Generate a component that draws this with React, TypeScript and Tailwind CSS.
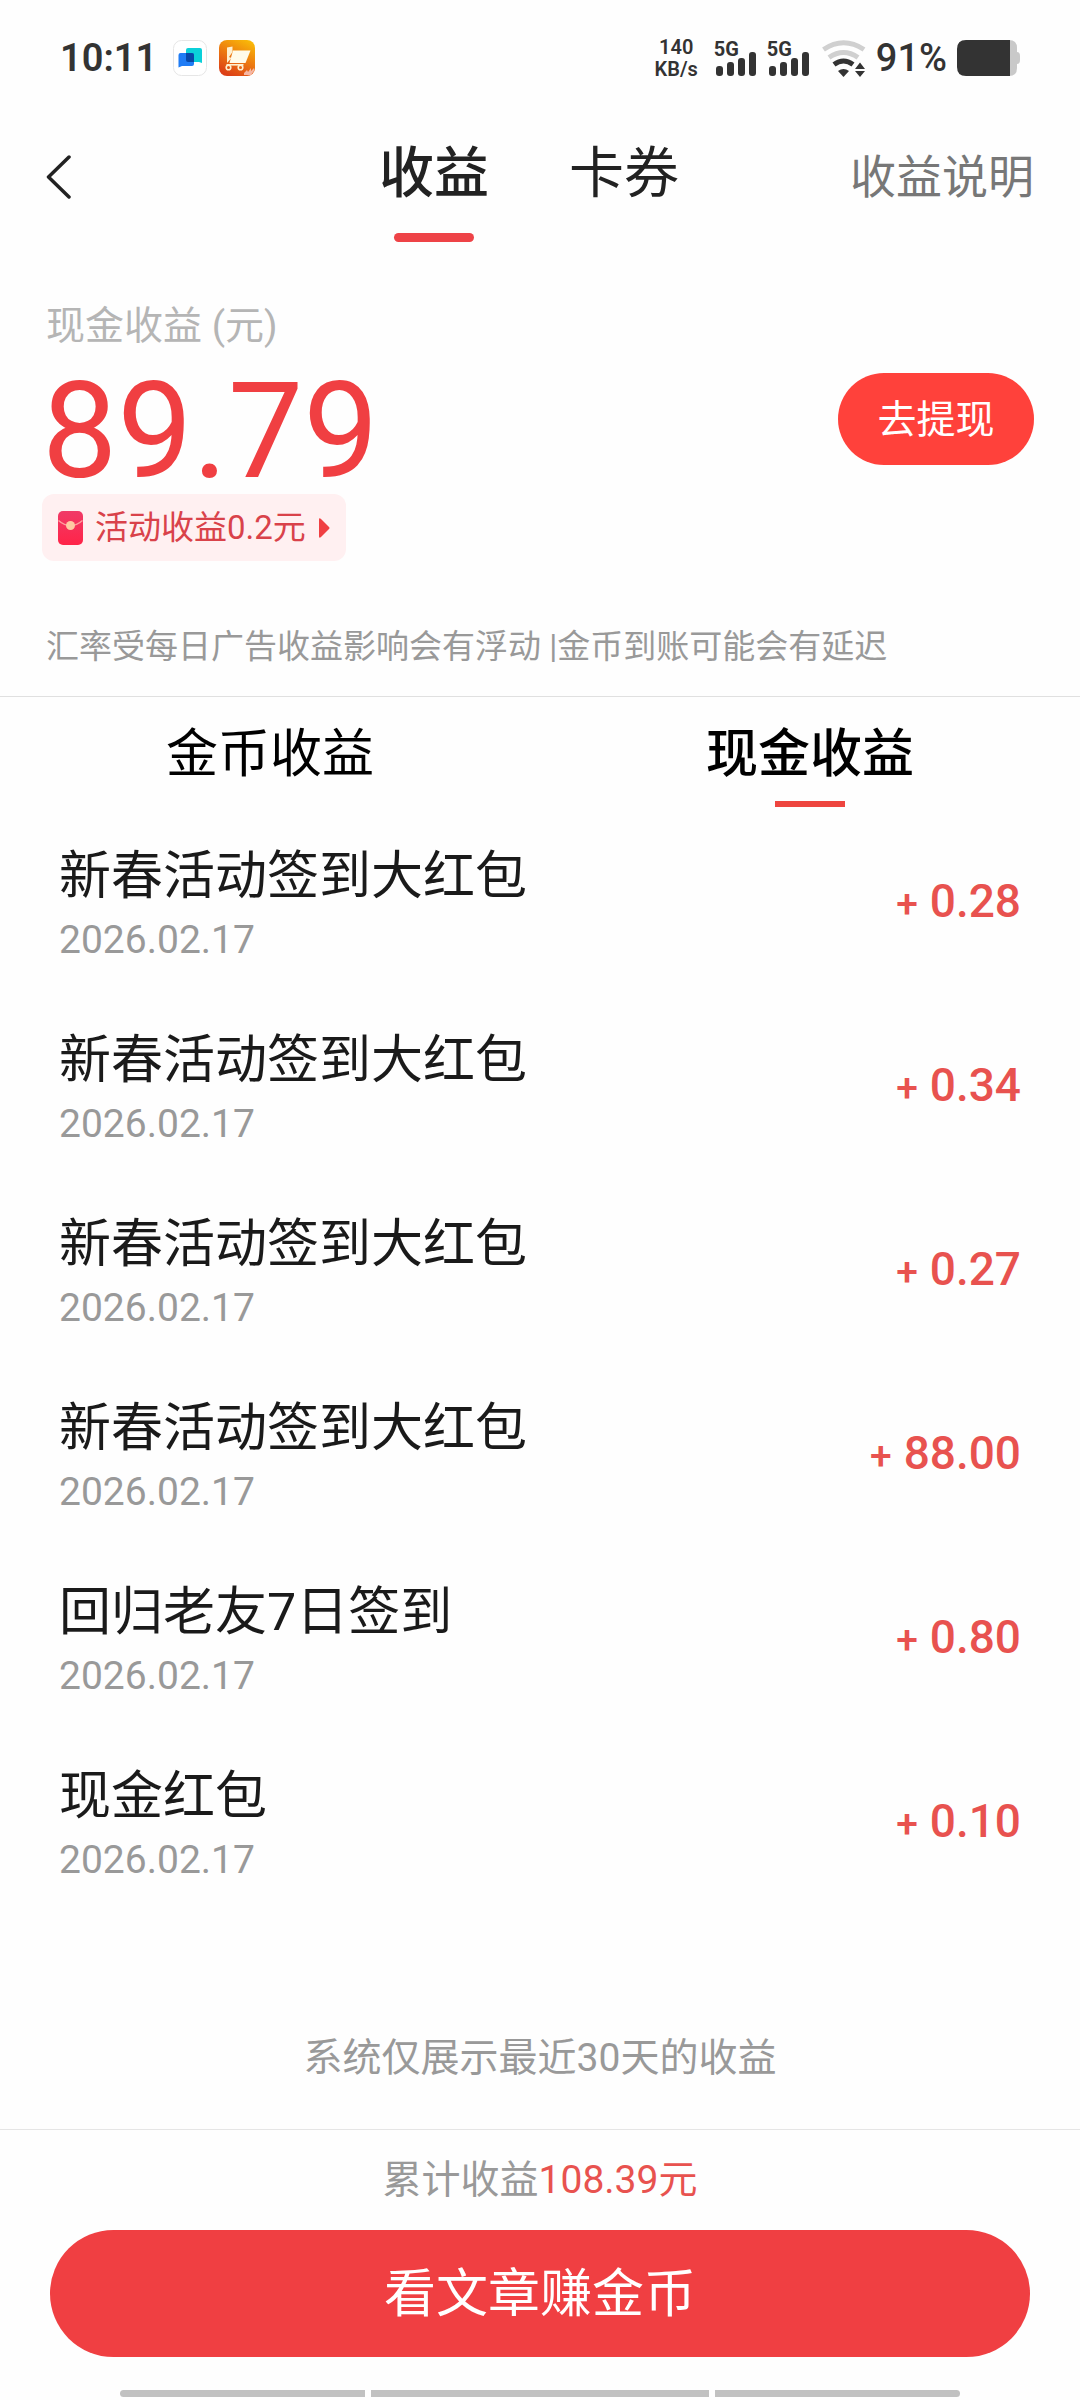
import { useState } from 'react';
import clsx from 'clsx';

type Income = { id: number; title: string; date: string; amount: string };

const cashIncome: Income[] = [
  { id: 1, title: '新春活动签到大红包', date: '2026.02.17', amount: '0.28' },
  { id: 2, title: '新春活动签到大红包', date: '2026.02.17', amount: '0.34' },
  { id: 3, title: '新春活动签到大红包', date: '2026.02.17', amount: '0.27' },
  { id: 4, title: '新春活动签到大红包', date: '2026.02.17', amount: '88.00' },
  { id: 5, title: '回归老友7日签到', date: '2026.02.17', amount: '0.80' },
  { id: 6, title: '现金红包', date: '2026.02.17', amount: '0.10' },
];

const pageTabs = ['收益', '卡券'];
const incomeTabs = ['金币收益', '现金收益'];

function ChatAppIcon() {
  return (
    <svg width="34" height="36" viewBox="0 0 34 36">
      <rect x="0.5" y="0.5" width="33" height="35" rx="8" fill="#fff" stroke="#e6e6e6" />
      <path d="M15 8h12a2 2 0 0 1 2 2v13l-3-1H15a2 2 0 0 1-2-2V10a2 2 0 0 1 2-2z" fill="#0bd0d9" />
      <path d="M7.500 13H19a2 2 0 0 1 2 2v9a2 2 0 0 1-2 2H9l-3.500 1.500V15a2 2 0 0 1 2-2z" fill="#1f7cf5" />
      <path d="M13 13h6a2 2 0 0 1 2 2v7h-6a2 2 0 0 1-2-2z" fill="#0748a8" />
    </svg>
  );
}

function CartAppIcon() {
  return (
    <svg width="36" height="36" viewBox="0 0 36 36">
      <defs>
        <linearGradient id="cart-bg" x1="0.8" y1="0" x2="0.3" y2="1">
          <stop offset="0" stopColor="#f9b908" />
          <stop offset="0.5" stopColor="#ec7a10" />
          <stop offset="1" stopColor="#dc3f17" />
        </linearGradient>
      </defs>
      <rect width="36" height="36" rx="8" fill="url(#cart-bg)" />
      <path d="M14 10.500h17.500l-5 12.500H10.500z" fill="#fffbe9" />
      <path d="M8 7.500l5.500-1v5.500L10 17l2.500 1-4.500 5z" fill="#fff0cf" />
      <path d="M7.500 24.800h17" stroke="#fff0cf" strokeWidth="1.600" />
      <circle cx="9.500" cy="27.500" r="2.300" fill="none" stroke="#fff0cf" strokeWidth="1.600" />
      <circle cx="21.500" cy="27.500" r="2.300" fill="none" stroke="#fff0cf" strokeWidth="1.600" />
      <path d="M25 33l3-3 1 2 3-4v3l3-3v3l-3 4h-7z" fill="#f6b7a4" />
    </svg>
  );
}

function SignalIcon() {
  return (
    <div className="flex h-9 flex-col">
      <span className="text-xl leading-[18px] font-bold">5G</span>
      <svg width="43" height="24" viewBox="0 0 43 24" className="-mt-1.5" fill="#333">
        <rect x="2" y="14" width="7" height="10" rx="3" />
        <rect x="13" y="10" width="7" height="14" rx="3" />
        <rect x="24" y="6" width="7" height="18" rx="3" />
        <rect x="35" y="0" width="7" height="24" rx="3" />
      </svg>
    </div>
  );
}

function WifiIcon() {
  return (
    <svg width="44" height="37" viewBox="0 0 44 37" fill="none">
      <path d="M1.500 9.500Q21.500-4 42 9.500" stroke="#d0d0d0" strokeWidth="5" />
      <path d="M7 17.500Q21.500 7.500 36 17.500" stroke="#d0d0d0" strokeWidth="5" />
      <path d="M12 24.500Q21.500 17.500 31 24.500" stroke="#333" strokeWidth="5" />
      <path d="M16 31q5.500-4 11 0l-5.500 6z" fill="#333" />
      <path d="M38 22.500l5 6.500H33zM38 37l5-6H33z" fill="#333" />
    </svg>
  );
}

function BatteryIcon() {
  return (
    <svg width="63" height="36" viewBox="0 0 63 36">
      <path d="M50 0h2q8 0 8 8v20q0 8-8 8h-2z" fill="#c9c9c9" />
      <path d="M60 12q3 0 3 4v4q0 4-3 4z" fill="#c9c9c9" />
      <path d="M9 0h44v36H9q-9 0-9-9V9q0-9 9-9z" fill="#333" />
    </svg>
  );
}

function RedPacketIcon() {
  return (
    <svg width="25" height="34" viewBox="0 0 25 34">
      <defs>
        <linearGradient id="packet" x1="0" y1="0" x2="0" y2="1">
          <stop offset="0" stopColor="#f03a67" />
          <stop offset="1" stopColor="#ff2448" />
        </linearGradient>
      </defs>
      <rect width="25" height="34" rx="5" fill="url(#packet)" />
      <path d="M0.500 9.500Q12.500 20 24.500 9.500" fill="none" stroke="#ff9d9d" strokeWidth="1.500" />
      <circle cx="12.500" cy="14.500" r="4.500" fill="#ffc9a3" />
    </svg>
  );
}

function StatusBar() {
  return (
    <div className="flex h-[116px] items-center justify-between px-[60px] text-[#333]">
      <div className="flex items-center">
        <span className="mr-4 text-[38px] leading-none font-semibold">10:11</span>
        <ChatAppIcon />
        <span className="w-3" />
        <CartAppIcon />
      </div>
      <div className="flex items-center">
        <div className="mr-4 flex flex-col items-center text-xl leading-[22px] font-semibold">
          <span>140</span>
          <span>KB/s</span>
        </div>
        <div className="mr-3 flex gap-2.5">
          <SignalIcon />
          <SignalIcon />
        </div>
        <WifiIcon />
        <span className="mr-2.5 ml-2.5 text-[38px] leading-none font-medium">91%</span>
        <BatteryIcon />
      </div>
    </div>
  );
}

function IncomeRow({ item }: { item: Income }) {
  return (
    <li className="flex h-[184px] items-start justify-between">
      <div className="flex flex-col">
        <span className="text-[52px] leading-[74px] text-[#1a1a1a]">{item.title}</span>
        <span className="text-[39px] leading-[52px] text-[#999]">{item.date}</span>
      </div>
      <span className="flex items-baseline gap-3 text-[46px] leading-[122px] font-medium text-[#e8524f]">
        <span className="text-[39px]">+</span>
        {item.amount}
      </span>
    </li>
  );
}

export default function App() {
  const [pageTab, setPageTab] = useState('收益');
  const [incomeTab, setIncomeTab] = useState('现金收益');

  return (
    <div className="flex min-h-screen flex-col bg-[#fefefe] font-[Roboto,'Noto_Sans_CJK_SC',sans-serif]">
      <StatusBar />

      <header className="flex h-[126px] items-start justify-between px-[46px]">
        <button type="button" aria-label="返回" className="flex h-[122px] w-[162px] items-center">
          <svg width="25" height="44" viewBox="0 0 25 44" fill="none">
            <path d="M23 2L2.500 22 23 42" stroke="#222" strokeWidth="3.500" strokeLinecap="round" strokeLinejoin="round" />
          </svg>
        </button>
        <nav className="flex gap-20">
          {pageTabs.map((tab) => (
            <button key={tab} type="button" onClick={() => setPageTab(tab)} className="flex flex-col items-center">
              <span className={clsx('text-[55px] leading-[115px] text-[#222]', pageTab === tab && 'font-medium')}>
                {tab}
              </span>
              {pageTab === tab && <span className="mt-0.5 h-[9px] w-20 rounded-full bg-[#ee4347]" />}
            </button>
          ))}
        </nav>
        <a href="#intro" className="text-[46px] leading-[122px] text-[#777]">
          收益说明
        </a>
      </header>

      <section className="border-b border-[#e0e0e0] px-[46px] pt-[54px] pb-6">
        <div className="flex items-start justify-between">
          <div className="flex flex-col items-start">
            <p className="text-[39px] leading-[60px] text-[#b5b5b5]">现金收益 (元)</p>
            <div className="-ml-1">
              <p className="mt-3.5 text-[134px] leading-[124px] text-[#f03f42]">89.79</p>
              <a
                href="#activity"
                className="inline-flex h-[67px] items-center gap-3 rounded-xl bg-[#fff0f1] px-4 text-[33px] text-[#d9424a]"
              >
                <RedPacketIcon />
                活动收益0.2元
                <svg width="12" height="20" viewBox="0 0 12 20" fill="#f03f42">
                  <path d="M1 1.500Q1-0.500 3 1L11 9q1 1 0 2L3 19q-2 1.500-2-0.500z" />
                </svg>
              </a>
            </div>
          </div>
          <button
            type="button"
            className="mt-[77px] h-[92px] w-[196px] rounded-full bg-[#ff413b] pt-0.5 text-[39px] text-white"
          >
            去提现
          </button>
        </div>
        <p className="mt-[61px] text-[33px] leading-[50px] text-[#999]">
          汇率受每日广告收益影响会有浮动 |金币到账可能会有延迟
        </p>
      </section>

      <nav className="grid h-[111px] grid-cols-2">
        {incomeTabs.map((tab) => (
          <button key={tab} type="button" onClick={() => setIncomeTab(tab)} className="flex flex-col items-center pt-3">
            <span className={clsx('text-[52px] leading-[92px] text-black', incomeTab === tab && 'font-medium')}>
              {tab}
            </span>
            {incomeTab === tab && <span className="h-1.5 w-[70px] bg-[#ee453f]" />}
          </button>
        ))}
      </nav>

      <main className="flex-1">
        <ul className="px-[59px] pt-8">
          {cashIncome.map((item) => (
            <IncomeRow key={item.id} item={item} />
          ))}
        </ul>
        <p className="mt-[84px] text-center text-[39px] leading-[60px] text-[#999]">系统仅展示最近30天的收益</p>
      </main>

      <footer className="border-t border-[#e5e5e5] pt-5">
        <p className="text-center text-[39px] leading-[60px] text-[#999]">
          累计收益<span className="text-[#e8524f]">108.39元</span>
        </p>
        <div className="mt-5 px-[50px]">
          <button type="button" className="h-[127px] w-full rounded-full bg-[#f03f42] pt-0.5 text-[52px] text-white">
            看文章赚金币
          </button>
        </div>
        <div className="mt-[33px] flex h-2.5 gap-1.5 px-[120px] pb-[3px]">
          <span className="flex-[245] rounded-l-full bg-[#c1c1c1]" />
          <span className="flex-[338] bg-[#c1c1c1]" />
          <span className="flex-[245] rounded-r-full bg-[#c1c1c1]" />
        </div>
      </footer>
    </div>
  );
}
